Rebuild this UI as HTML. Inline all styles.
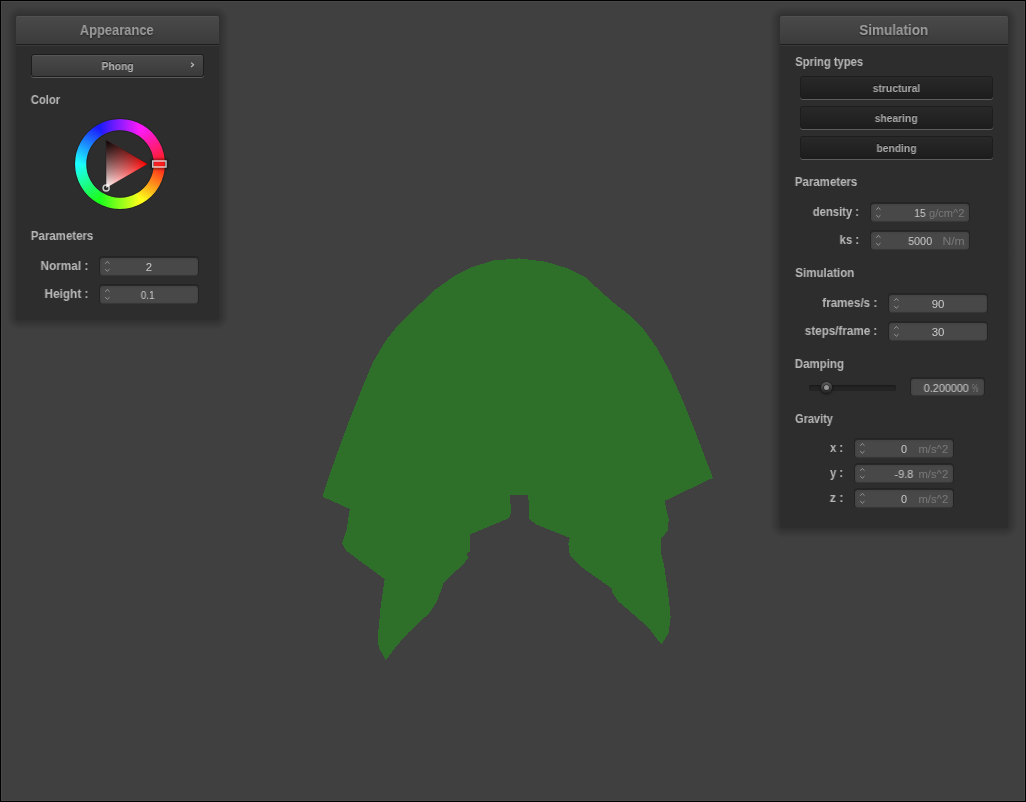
<!DOCTYPE html>
<html><head><meta charset="utf-8"><title>Cloth Simulator</title>
<style>
html,body{margin:0;padding:0;background:#000;}
body{width:1026px;height:802px;position:relative;overflow:hidden;font-family:'Liberation Sans', sans-serif;}
#scene{position:absolute;left:1px;top:1px;width:1024px;height:800px;background:#404040;box-shadow:inset 0 0 0 1px #484848;}
.abs{position:absolute;}
.win{position:absolute;background:#2d2d2d;border-radius:2px;overflow:hidden;}
.hdr{position:absolute;left:0;top:0;right:0;height:30px;background:linear-gradient(#4a4a4a,#3a3a3a);box-shadow:inset 0 1px 0 rgba(92,92,92,.45);}
.hdr:after{content:"";position:absolute;left:0;right:0;top:28px;height:1px;background:#1d1d1d;}
.bt{position:absolute;box-sizing:border-box;border-radius:3px;}
.bt i{position:absolute;left:0;right:0;top:0;bottom:1px;border:1px solid #1d1d1d;border-radius:3px;background:linear-gradient(#4a4a4a,#3a3a3a);box-shadow:0 1px 0 #5c5c5c,inset 0 1px 0 rgba(92,92,92,.7);}
.bt.pushed i{background:linear-gradient(#292929,#1d1d1d);box-shadow:0 1px 0 #5c5c5c;}
.tb{position:absolute;background:#484848;border-radius:3px;box-shadow:inset 0 0 2px rgba(32,32,32,.3),0 -1px 0 rgba(0,0,0,.12);}
.tbb{position:absolute;box-sizing:border-box;border:1px solid rgba(0,0,0,.19);border-radius:3px;z-index:2}
.tx{position:absolute;white-space:nowrap;line-height:1;transform-origin:0 0;display:block;will-change:transform;}
.title{line-height:15px;font-weight:bold;font-size:13.8px;color:rgba(220,220,220,.63);text-shadow:0 1px 2px rgba(0,0,0,.5);}
.lab{line-height:14px;font-weight:bold;font-size:12.4px;color:rgba(255,255,255,.66);}
.btn,.btnp{line-height:12px;font-weight:bold;font-size:10.8px;color:rgba(255,255,255,.63);text-shadow:0 -1px 0 rgba(0,0,0,.63);}
.val{line-height:12px;font-size:10.9px;color:rgba(255,255,255,.7);}
.unit{line-height:12px;font-size:10.9px;color:rgba(255,255,255,.26);}
</style></head><body>
<div id="scene"></div>
<svg class="abs" style="left:0;top:0" width="1026" height="802" viewBox="0 0 1026 802" shape-rendering="crispEdges"><polygon fill="#2e7029" points="519.5,258.4 546.2,261.8 567.1,268.3 585.5,277.5 611.6,301.1 630.0,315.5 643.1,328.6 656.2,346.9 669.3,370.4 682.3,399.3 692.8,425.4 705.9,459.5 713.0,477.8 665.3,500.6 665.3,504.5 668.7,518.9 667.9,530.7 660.9,538.6 661.4,554.3 664.0,564.7 667.9,590.9 670.6,617.1 668.7,632.8 661.4,644.6 648.3,627.6 635.2,615.8 618.2,601.4 612.2,592.2 611.6,588.3 580.2,566.1 569.8,555.6 568.4,543.8 569.8,538.0 535.7,524.2 529.0,518.9 529.0,500.1 528.0,500.1 528.0,494.9 510.1,494.9 510.1,503.6 511.1,503.6 511.1,512.4 509.0,518.1 469.7,534.6 469.7,551.6 467.1,553.0 467.9,558.2 463.2,564.7 454.0,572.6 443.5,583.1 437.0,601.4 429.1,613.2 408.2,632.8 397.7,644.6 385.9,660.3 378.6,647.2 378.1,632.8 380.7,606.6 384.6,579.1 346.7,551.1 341.9,543.3 346.7,529.4 349.8,509.0 323.6,497.2 323.1,494.0 334.9,459.5 349.3,420.2 362.4,387.5 372.8,362.6 385.9,340.3 396.4,327.2 414.7,308.9 435.7,289.3 454.0,276.2 472.3,267.0 493.3,260.5"/></svg>

<div style="position:absolute;left:20px;top:6px;width:195px;height:10px;background:linear-gradient(to top,rgba(0,0,0,0.251),rgba(0,0,0,0))"></div>
<div style="position:absolute;left:20px;top:320px;width:195px;height:10px;background:linear-gradient(to bottom,rgba(0,0,0,0.251),rgba(0,0,0,0))"></div>
<div style="position:absolute;left:6px;top:20px;width:10px;height:296px;background:linear-gradient(to left,rgba(0,0,0,0.251),rgba(0,0,0,0))"></div>
<div style="position:absolute;left:219px;top:20px;width:10px;height:296px;background:linear-gradient(to right,rgba(0,0,0,0.251),rgba(0,0,0,0))"></div>
<div style="position:absolute;left:6px;top:6px;width:14px;height:14px;background:radial-gradient(circle at 14px 14px,rgba(0,0,0,0.351) 0,rgba(0,0,0,0) 14px)"></div>
<div style="position:absolute;left:215px;top:6px;width:14px;height:14px;background:radial-gradient(circle at 0 14px,rgba(0,0,0,0.351) 0,rgba(0,0,0,0) 14px)"></div>
<div style="position:absolute;left:6px;top:316px;width:14px;height:14px;background:radial-gradient(circle at 14px 0,rgba(0,0,0,0.351) 0,rgba(0,0,0,0) 14px)"></div>
<div style="position:absolute;left:215px;top:316px;width:14px;height:14px;background:radial-gradient(circle at 0 0,rgba(0,0,0,0.351) 0,rgba(0,0,0,0) 14px)"></div>
<div class="win" style="left:16px;top:16px;width:203px;height:304px"><div class="hdr"></div></div>
<div class="bt" style="left:31px;top:54px;width:173px;height:24px"><i></i></div>
<svg class="abs" style="left:188px;top:60px" width="10" height="10" viewBox="0 0 10 10"><path d="M3.1 2.6 L5.6 4.8 L3.1 7.0" fill="none" stroke="#fff" stroke-opacity=".63" stroke-width="1.25"/></svg>
<svg class="abs" style="left:65px;top:109px" width="110" height="110" viewBox="-55 -55 110 110">
<defs>
<linearGradient id="g0" gradientUnits="userSpaceOnUse" x1="39.373" y1="-0.437" x2="19.307" y2="34.316"><stop offset="0" stop-color="#ff1a1c"/><stop offset="1" stop-color="#fdff1a"/></linearGradient>
<linearGradient id="g1" gradientUnits="userSpaceOnUse" x1="20.065" y1="33.879" x2="-20.065" y2="33.879"><stop offset="0" stop-color="#fffd1a"/><stop offset="1" stop-color="#1aff1c"/></linearGradient>
<linearGradient id="g2" gradientUnits="userSpaceOnUse" x1="-19.307" y1="34.316" x2="-39.373" y2="-0.437"><stop offset="0" stop-color="#1cff1a"/><stop offset="1" stop-color="#1afdff"/></linearGradient>
<linearGradient id="g3" gradientUnits="userSpaceOnUse" x1="-39.373" y1="0.437" x2="-19.307" y2="-34.316"><stop offset="0" stop-color="#1afffd"/><stop offset="1" stop-color="#1c1aff"/></linearGradient>
<linearGradient id="g4" gradientUnits="userSpaceOnUse" x1="-20.065" y1="-33.879" x2="20.065" y2="-33.879"><stop offset="0" stop-color="#1a1cff"/><stop offset="1" stop-color="#ff1afd"/></linearGradient>
<linearGradient id="g5" gradientUnits="userSpaceOnUse" x1="19.307" y1="-34.316" x2="39.373" y2="0.437"><stop offset="0" stop-color="#fd1aff"/><stop offset="1" stop-color="#ff1c1a"/></linearGradient>
<linearGradient id="tw" gradientUnits="userSpaceOnUse" x1="27.750" y1="0" x2="-13.875" y2="24.032"><stop offset="0" stop-color="#ff0000"/><stop offset="1" stop-color="#ffffff"/></linearGradient>
<linearGradient id="tk" gradientUnits="userSpaceOnUse" x1="6.938" y1="12.016" x2="-13.875" y2="-24.032"><stop offset="0" stop-color="#000" stop-opacity="0"/><stop offset="1" stop-color="#000" stop-opacity="1"/></linearGradient>
<filter id="mb" x="-50%" y="-50%" width="200%" height="200%"><feGaussianBlur stdDeviation="1.3"/></filter>
</defs>
<path d="M33.748 -0.375 A33.75 33.75 0 0 1 16.549 29.414 L22.066 39.219 A45.0 45.0 0 0 0 44.997 -0.500 Z" fill="url(#g0)"/>
<path d="M17.199 29.039 A33.75 33.75 0 0 1 -17.199 29.039 L-22.932 38.719 A45.0 45.0 0 0 0 22.932 38.719 Z" fill="url(#g1)"/>
<path d="M-16.549 29.414 A33.75 33.75 0 0 1 -33.748 -0.375 L-44.997 -0.500 A45.0 45.0 0 0 0 -22.066 39.219 Z" fill="url(#g2)"/>
<path d="M-33.748 0.375 A33.75 33.75 0 0 1 -16.549 -29.414 L-22.066 -39.219 A45.0 45.0 0 0 0 -44.997 0.500 Z" fill="url(#g3)"/>
<path d="M-17.199 -29.039 A33.75 33.75 0 0 1 17.199 -29.039 L22.932 -38.719 A45.0 45.0 0 0 0 -22.932 -38.719 Z" fill="url(#g4)"/>
<path d="M16.549 -29.414 A33.75 33.75 0 0 1 33.748 0.375 L44.997 0.500 A45.0 45.0 0 0 0 22.066 -39.219 Z" fill="url(#g5)"/>
<circle r="33.25" fill="none" stroke="#000" stroke-opacity=".25"/><circle r="45.5" fill="none" stroke="#000" stroke-opacity=".25"/>
<path d="M27.750 0 L-13.875 24.032 L-13.875 -24.032 Z" fill="url(#tw)"/><path d="M27.750 0 L-13.875 24.032 L-13.875 -24.032 Z" fill="url(#tk)" stroke="#000" stroke-opacity=".25"/>
<rect x="31.75" y="-4" width="15.25" height="8" fill="none" stroke="#000" stroke-opacity=".45" stroke-width="2.5" filter="url(#mb)"/>
<rect x="32.75" y="-3.0" width="13.25" height="6.0" fill="none" stroke="#fff" stroke-opacity=".75" stroke-width="1.5"/>
<circle cx="-13.875" cy="24.032" r="3.0" fill="none" stroke="#fff" stroke-opacity=".75" stroke-width="1.5"/>
</svg>
<div class="tbb" style="left:99px;top:256px;width:100px;height:20px"></div><div class="tb" style="left:100px;top:258px;width:98px;height:18px"></div><svg class="abs" style="left:99px;top:256px" width="16" height="20" viewBox="0 0 16 20"><path d="M6.2 7.7 L8.35 5.6 L10.5 7.7 M6.2 13.1 L8.35 15.2 L10.5 13.1" fill="none" stroke="#fff" stroke-opacity=".42" stroke-width="1"/></svg>
<div class="tbb" style="left:99px;top:284px;width:100px;height:20px"></div><div class="tb" style="left:100px;top:286px;width:98px;height:18px"></div><svg class="abs" style="left:99px;top:284px" width="16" height="20" viewBox="0 0 16 20"><path d="M6.2 7.7 L8.35 5.6 L10.5 7.7 M6.2 13.1 L8.35 15.2 L10.5 13.1" fill="none" stroke="#fff" stroke-opacity=".42" stroke-width="1"/></svg>
<div style="position:absolute;left:784px;top:6px;width:220px;height:10px;background:linear-gradient(to top,rgba(0,0,0,0.251),rgba(0,0,0,0))"></div>
<div style="position:absolute;left:784px;top:528px;width:220px;height:10px;background:linear-gradient(to bottom,rgba(0,0,0,0.251),rgba(0,0,0,0))"></div>
<div style="position:absolute;left:770px;top:20px;width:10px;height:504px;background:linear-gradient(to left,rgba(0,0,0,0.251),rgba(0,0,0,0))"></div>
<div style="position:absolute;left:1008px;top:20px;width:10px;height:504px;background:linear-gradient(to right,rgba(0,0,0,0.251),rgba(0,0,0,0))"></div>
<div style="position:absolute;left:770px;top:6px;width:14px;height:14px;background:radial-gradient(circle at 14px 14px,rgba(0,0,0,0.351) 0,rgba(0,0,0,0) 14px)"></div>
<div style="position:absolute;left:1004px;top:6px;width:14px;height:14px;background:radial-gradient(circle at 0 14px,rgba(0,0,0,0.351) 0,rgba(0,0,0,0) 14px)"></div>
<div style="position:absolute;left:770px;top:524px;width:14px;height:14px;background:radial-gradient(circle at 14px 0,rgba(0,0,0,0.351) 0,rgba(0,0,0,0) 14px)"></div>
<div style="position:absolute;left:1004px;top:524px;width:14px;height:14px;background:radial-gradient(circle at 0 0,rgba(0,0,0,0.351) 0,rgba(0,0,0,0) 14px)"></div>
<div class="win" style="left:780px;top:16px;width:228px;height:512px"><div class="hdr"></div></div>
<div class="bt pushed" style="left:800px;top:76px;width:193px;height:24px"><i></i></div>
<div class="bt pushed" style="left:800px;top:106px;width:193px;height:24px"><i></i></div>
<div class="bt pushed" style="left:800px;top:136px;width:193px;height:24px"><i></i></div>
<div class="tbb" style="left:870px;top:202px;width:100px;height:20px"></div><div class="tb" style="left:871px;top:204px;width:98px;height:18px"></div><svg class="abs" style="left:870px;top:202px" width="16" height="20" viewBox="0 0 16 20"><path d="M6.2 7.7 L8.35 5.6 L10.5 7.7 M6.2 13.1 L8.35 15.2 L10.5 13.1" fill="none" stroke="#fff" stroke-opacity=".42" stroke-width="1"/></svg>
<div class="tbb" style="left:870px;top:230px;width:100px;height:20px"></div><div class="tb" style="left:871px;top:232px;width:98px;height:18px"></div><svg class="abs" style="left:870px;top:230px" width="16" height="20" viewBox="0 0 16 20"><path d="M6.2 7.7 L8.35 5.6 L10.5 7.7 M6.2 13.1 L8.35 15.2 L10.5 13.1" fill="none" stroke="#fff" stroke-opacity=".42" stroke-width="1"/></svg>
<div class="tbb" style="left:888px;top:293px;width:100px;height:20px"></div><div class="tb" style="left:889px;top:295px;width:98px;height:18px"></div><svg class="abs" style="left:888px;top:293px" width="16" height="20" viewBox="0 0 16 20"><path d="M6.2 7.7 L8.35 5.6 L10.5 7.7 M6.2 13.1 L8.35 15.2 L10.5 13.1" fill="none" stroke="#fff" stroke-opacity=".42" stroke-width="1"/></svg>
<div class="tbb" style="left:888px;top:321px;width:100px;height:20px"></div><div class="tb" style="left:889px;top:323px;width:98px;height:18px"></div><svg class="abs" style="left:888px;top:321px" width="16" height="20" viewBox="0 0 16 20"><path d="M6.2 7.7 L8.35 5.6 L10.5 7.7 M6.2 13.1 L8.35 15.2 L10.5 13.1" fill="none" stroke="#fff" stroke-opacity=".42" stroke-width="1"/></svg>
<div class="abs" style="left:809px;top:385px;width:87px;height:6px;border-radius:2px;background:#242424;box-shadow:inset 0 1px 2px rgba(0,0,0,.35)"></div>
<div class="abs" style="left:820.7px;top:381.9px;width:11.6px;height:11.6px;border-radius:50%;background:linear-gradient(#5c5c5c,#232323);box-shadow:0 0 0 .5px #1d1d1d,0 1px 3px rgba(0,0,0,.6)"></div>
<div class="abs" style="left:823.7px;top:384.9px;width:5.6px;height:5.6px;border-radius:50%;background:#969696;box-shadow:0 0 0 .5px #1d1d1d"></div>
<div class="tbb" style="left:910px;top:377px;width:75px;height:19px"></div><div class="tb" style="left:911px;top:379px;width:73px;height:17px"></div>
<div class="tbb" style="left:854px;top:438px;width:100px;height:20px"></div><div class="tb" style="left:855px;top:440px;width:98px;height:18px"></div><svg class="abs" style="left:854px;top:438px" width="16" height="20" viewBox="0 0 16 20"><path d="M6.2 7.7 L8.35 5.6 L10.5 7.7 M6.2 13.1 L8.35 15.2 L10.5 13.1" fill="none" stroke="#fff" stroke-opacity=".42" stroke-width="1"/></svg>
<div class="tbb" style="left:854px;top:463px;width:100px;height:20px"></div><div class="tb" style="left:855px;top:465px;width:98px;height:18px"></div><svg class="abs" style="left:854px;top:463px" width="16" height="20" viewBox="0 0 16 20"><path d="M6.2 7.7 L8.35 5.6 L10.5 7.7 M6.2 13.1 L8.35 15.2 L10.5 13.1" fill="none" stroke="#fff" stroke-opacity=".42" stroke-width="1"/></svg>
<div class="tbb" style="left:854px;top:488px;width:100px;height:20px"></div><div class="tb" style="left:855px;top:490px;width:98px;height:18px"></div><svg class="abs" style="left:854px;top:488px" width="16" height="20" viewBox="0 0 16 20"><path d="M6.2 7.7 L8.35 5.6 L10.5 7.7 M6.2 13.1 L8.35 15.2 L10.5 13.1" fill="none" stroke="#fff" stroke-opacity=".42" stroke-width="1"/></svg>
<span id="t1" class="tx title" style="left:80px;top:23px;transform:translateX(-0.23px) scaleX(0.9348)">Appearance</span>
<span id="t2" class="tx btn" style="left:102px;top:60px;transform:translateX(-0.46px) scaleX(0.9548)">Phong</span>
<span id="t3" class="tx lab" style="left:31px;top:93px;transform:translateX(-0.21px) scaleX(0.9071)">Color</span>
<span id="t4" class="tx lab" style="left:31px;top:229px;transform:translateX(-0.19px) scaleX(0.9260)">Parameters</span>
<span id="t5" class="tx lab" style="left:41px;top:259px;transform:translateX(-0.46px) scaleX(0.9503)">Normal :</span>
<span id="t6" class="tx lab" style="left:45px;top:287px;transform:translateX(-0.46px) scaleX(0.9512)">Height :</span>
<span id="t7" class="tx val" style="left:146px;top:261px;transform:translateX(-0.28px) scaleX(1.0434)">2</span>
<span id="t8" class="tx val" style="left:141px;top:289px;transform:translateX(-0.22px) scaleX(0.9123)">0.1</span>
<span id="s1" class="tx title" style="left:859px;top:23px;transform:translateX(0.26px) scaleX(0.9776)">Simulation</span>
<span id="s2" class="tx lab" style="left:795px;top:55px;transform:translateX(0.27px) scaleX(0.9030)">Spring types</span>
<span id="s3" class="tx btnp" style="left:873px;top:82px;transform:translateX(-0.23px) scaleX(0.9528)">structural</span>
<span id="s4" class="tx btnp" style="left:875px;top:112px;transform:translateX(-0.24px) scaleX(0.9500)">shearing</span>
<span id="s5" class="tx btnp" style="left:877px;top:142px;transform:translateX(-0.47px) scaleX(0.9510)">bending</span>
<span id="s6" class="tx lab" style="left:795px;top:175px;transform:translateX(-0.19px) scaleX(0.9260)">Parameters</span>
<span id="s7" class="tx lab" style="left:813px;top:205px;transform:translateX(-0.21px) scaleX(0.9076)">density :</span>
<span id="s8" class="tx lab" style="left:840px;top:233px;transform:translateX(-0.42px) scaleX(0.9117)">ks :</span>
<span id="s9" class="tx val" style="left:915px;top:207px;transform:translateX(-0.71px) scaleX(0.9411)">15</span>
<span id="s10" class="tx unit" style="left:929px;top:207px;transform:translateX(-0.01px) scaleX(1.0149)">g/cm^2</span>
<span id="s11" class="tx val" style="left:908px;top:235px;transform:translateX(0.26px) scaleX(0.9828)">5000</span>
<span id="s12" class="tx unit" style="left:943px;top:235px;transform:translateX(-0.59px) scaleX(1.1136)">N/m</span>
<span id="s13" class="tx lab" style="left:795px;top:266px;transform:translateX(0.27px) scaleX(0.9317)">Simulation</span>
<span id="s14" class="tx lab" style="left:822px;top:296px;transform:translateX(0.26px) scaleX(0.9380)">frames/s :</span>
<span id="s15" class="tx lab" style="left:805px;top:324px;transform:translateX(-0.22px) scaleX(0.9397)">steps/frame :</span>
<span id="s16" class="tx val" style="left:932px;top:298px;transform:translateX(-0.28px) scaleX(1.0496)">90</span>
<span id="s17" class="tx val" style="left:932px;top:326px;transform:translateX(-0.28px) scaleX(1.0491)">30</span>
<span id="s18" class="tx lab" style="left:795px;top:357px;transform:translateX(-0.20px) scaleX(0.9282)">Damping</span>
<span id="s19" class="tx val" style="left:924px;top:382px;transform:translateX(-0.25px) scaleX(0.9922)">0.200000</span>
<span id="s20" class="tx unit" style="left:972px;top:382px;transform:translateX(-0.17px) scaleX(0.6837)">%</span>
<span id="s21" class="tx lab" style="left:795px;top:412px;transform:translateX(0.06px) scaleX(0.8857)">Gravity</span>
<span id="s22" class="tx lab" style="left:830px;top:441px;transform:translateX(0.00px) scaleX(0.9057)">x :</span>
<span id="s23" class="tx lab" style="left:830px;top:466px;transform:translateX(0.00px) scaleX(0.9057)">y :</span>
<span id="s24" class="tx lab" style="left:830px;top:491px;transform:translateX(-0.24px) scaleX(0.9796)">z :</span>
<span id="s25" class="tx val" style="left:901px;top:443px;transform:translateX(0.01px) scaleX(0.9818)">0</span>
<span id="s26" class="tx unit" style="left:919px;top:443px;transform:translateX(-0.53px) scaleX(1.0346)">m/s^2</span>
<span id="s27" class="tx val" style="left:895px;top:468px;transform:translateX(-0.50px) scaleX(0.9973)">-9.8</span>
<span id="s28" class="tx unit" style="left:919px;top:468px;transform:translateX(-0.53px) scaleX(1.0346)">m/s^2</span>
<span id="s29" class="tx val" style="left:901px;top:493px;transform:translateX(0.01px) scaleX(0.9818)">0</span>
<span id="s30" class="tx unit" style="left:919px;top:493px;transform:translateX(-0.53px) scaleX(1.0346)">m/s^2</span>
</body></html>
